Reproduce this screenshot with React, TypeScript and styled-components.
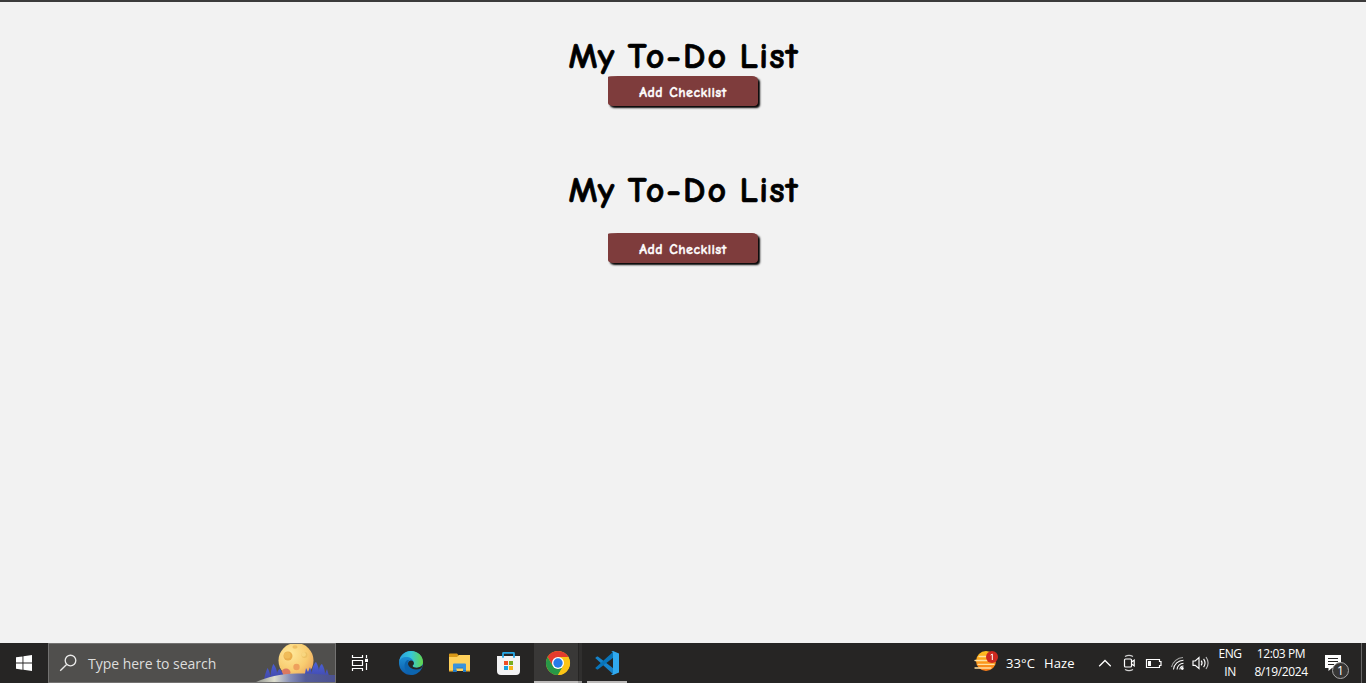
import React from "react";
import styled, { createGlobalStyle } from "styled-components";

const GlobalStyle = createGlobalStyle`
  * { box-sizing: border-box; }
  body { margin: 0; background: #f2f2f2; overflow: hidden; }
`;

const Screen = styled.div`
  height: 683px;
  width: 1366px;
  display: flex;
  flex-direction: column;
  background: #f2f2f2;
`;

const BrowserEdge = styled.div`
  height: 2px;
  flex: none;
  background: #3c3b3b;
`;

const Page = styled.main`
  flex: 1;
  display: flex;
  flex-direction: column;
  align-items: center;
  padding-top: 32px;
  font-family: "Comic Sans MS", "Comic Neue", Lato, sans-serif;
`;

const Checklist = styled.section<{ $gap: number }>`
  display: flex;
  flex-direction: column;
  align-items: center;
  gap: ${(p) => p.$gap}px;
  margin-bottom: 62px;
`;

const Title = styled.h1`
  margin: 0;
  width: 229px;
  height: 42px;
  display: flex;
  justify-content: space-between;
  font-size: 36px;
  line-height: 45px;
  font-weight: 700;
  -webkit-text-stroke: 0.7px #000;
  color: #000;
  white-space: nowrap;
`;

const Word = styled.span<{ $spacing: number }>`
  letter-spacing: ${(p) => p.$spacing}px;
  margin-right: ${(p) => -p.$spacing}px;
`;

const AddButton = styled.button`
  width: 150px;
  height: 30px;
  padding: 3px 0 0;
  border: 0;
  border-radius: 10px 6px 4px 5px / 1px 4px 4px 3px;
  background: #7e3c3c;
  color: #fff;
  box-shadow: 2px 2px 2px #000;
  font: 900 14px/27px "Comic Sans MS", "Comic Neue", Lato, sans-serif;
  -webkit-text-stroke: 0.35px #fff;
  letter-spacing: 0.45px;
  word-spacing: 1px;
`;

const Taskbar = styled.footer`
  height: 40px;
  flex: none;
  display: flex;
  background: #262524;
  color: #fff;
  font-family: "Segoe UI", "Open Sans", sans-serif;
`;

const Slot = styled.div<{ $width: number; $active?: boolean }>`
  width: ${(p) => p.$width}px;
  height: 40px;
  flex: none;
  background: ${(p) => (p.$active ? "#393837" : "transparent")};
  svg { display: block; }
`;

const Search = styled.div`
  width: 288px;
  height: 40px;
  flex: none;
  display: flex;
  align-items: center;
  border: 1px solid #737271;
  background: #504f4d;
  svg { display: block; flex: none; }
`;

const SearchHint = styled.span`
  flex: 1;
  white-space: nowrap;
  font-size: 14px;
  letter-spacing: -0.03px;
  color: #dddddc;
  padding-top: 1px;
`;

const Tray = styled.div`
  margin-left: auto;
  display: flex;
  width: 392px;
`;

const Weather = styled.div`
  width: 85px;
  flex: none;
  display: flex;
  align-items: center;
  gap: 9px;
  padding-left: 8px;
  font-size: 13px;
  letter-spacing: 0.1px;
  white-space: nowrap;
`;

const Stack = styled.div<{ $width: number }>`
  width: ${(p) => p.$width}px;
  display: flex;
  flex-direction: column;
  align-items: center;
  padding-top: 2px;
  font-size: 12px;
  line-height: 18px;
  letter-spacing: -0.4px;
  white-space: nowrap;
`;

const ShowDesktop = styled.div`
  width: 5px;
  height: 40px;
  border-left: 1px solid #686767;
`;

const HazeSlot = styled.div`
  width: 24px;
  padding-top: 7px;
  flex: none;
`;

const StartIcon = () => (
  <svg width="48" height="40" fill="#fff">
    <path d="M16 14.3 22.5 13.4V19.5H16zM23.4 13.2 32 12V19.5H23.4zM16 20.5H22.5V26.7L16 25.8zM23.4 20.5H32V28L23.4 26.8z" />
  </svg>
);

const SearchIcon = () => (
  <svg width="39" height="38" fill="none" stroke="#e9e9e8" strokeWidth="1.35">
    <circle cx="21.5" cy="16.5" r="5.3" />
    <path d="M17.6 20.4 11.2 26.8" />
  </svg>
);

const MoonScene = () => (
  <svg width="80" height="38" viewBox="255 644 80 38">
    <defs>
      <radialGradient id="moon" cx=".35" cy=".3" r=".8">
        <stop offset="0" stopColor="#ffe89a" />
        <stop offset=".6" stopColor="#f8cc70" />
        <stop offset="1" stopColor="#eaa15b" />
      </radialGradient>
      <linearGradient id="hill">
        <stop offset="0" stopColor="#8e918c" />
        <stop offset=".23" stopColor="#dedfcf" />
        <stop offset=".43" stopColor="#858db7" />
        <stop offset=".62" stopColor="#545c99" />
        <stop offset="1" stopColor="#4b5190" />
      </linearGradient>
      <linearGradient id="tree" x2="0" y2="1">
        <stop offset="0" stopColor="#4b61da" />
        <stop offset="1" stopColor="#4146a5" />
      </linearGradient>
    </defs>
    <circle cx="296" cy="660.5" r="17.5" fill="url(#moon)" />
    <circle cx="288" cy="656" r="4.5" fill="#e9ad4c" />
    <circle cx="287.2" cy="655.2" r="3.3" fill="#f0bc59" />
    <circle cx="304.5" cy="655" r="3" fill="#edc266" />
    <circle cx="303.6" cy="654.4" r="2.3" fill="#f8d67f" />
    <ellipse cx="295" cy="647" rx="2.6" ry="1.7" fill="#efbf63" />
    <circle cx="296.5" cy="667" r="3.2" fill="#eea05d" />
    <ellipse cx="286" cy="672.5" rx="4.5" ry="4" fill="#db7960" />
    <path fill="url(#tree)" d="M264 680C265 674 267 669 267.5 668C269 670 270 674 270.5 676C271 669 273 664 273.5 664C276 667 277 671 277 673C278 670 279 669 280 669C282 672 284 675 284 678ZM304 679 306 668 308 672 310 667 312 673C312 667 315 662 316 662C318 665 319 669 319 671C319 667 321 664 322 664C324 667 325 671 325 674L327 669 329 676Z" />
    <path fill="url(#hill)" d="M256 682C267 677 280 674 297 673.5C314 673 322 675 336 675V682Z" />
  </svg>
);

const TaskViewIcon = () => (
  <svg width="48" height="40" fill="none" stroke="#fff" strokeWidth="1.2">
    <path d="M16.5 12V14.5H26.5V12M16.5 28V25.5H26.5V28M16.5 17.5H26.5V22.5H16.5ZM30.5 12V15M30.5 20V27" />
    <path d="M29 15.8H32V19H29Z" fill="#fff" stroke="none" />
  </svg>
);

const EdgeIcon = () => (
  <svg width="49" height="40" viewBox="0 0 49 40">
    <defs>
      <linearGradient id="edgeTop"><stop offset="0" stopColor="#299fe0" /><stop offset=".5" stopColor="#36c7d9" /><stop offset="1" stopColor="#65d747" /></linearGradient>
      <linearGradient id="edgeBase" x2="0" y2="1"><stop offset="0" stopColor="#209fe0" /><stop offset="1" stopColor="#0d5bab" /></linearGradient>
    </defs>
    <circle cx="26" cy="20" r="12" fill="url(#edgeBase)" />
    <path fill="url(#edgeTop)" d="M14.1 18.6C15 12.3 20 8 26 8C33 8 38 13 38 19C38 23.1 34.8 24.7 31.7 24.7C28.6 24.7 27.2 23.5 27.6 22.6C28.7 21.7 29 20.9 28.8 19.5C28.2 15.4 24 13.5 20 14C17 14.4 15 16.3 14.1 18.6Z" />
    <path fill="#0c65af" d="M22.2 17C19.2 19 18.8 24.2 20.7 27.3C22.2 29.8 24.5 31.4 27 31.9C31 31.4 34.5 28.9 36.3 25.8C36.4 25.4 36 25.2 35.5 25.5C30.8 28 25.2 26.2 23.3 22.6C22.3 20.6 22.7 18.6 24.2 17.2Z" />
    <path fill="#262524" d="M24.1 18.2C26.1 16.8 29 18 28.9 20.5C28.8 22 27.4 22.2 27.6 23.1C28 24.6 31 25 33 24.5C35 24.1 36.6 23 37.6 22.1C37.3 23.5 36.9 24.6 36.3 25.2C31.5 27.7 26 26.4 23.8 23C22.6 21.2 22.9 19.2 24.1 18.2Z" />
  </svg>
);

const FolderIcon = () => (
  <svg width="49" height="40">
    <path fill="#d99918" d="M14 12V11.3Q14 10.6 15 10.6H22L24 12.7V16H14Z" />
    <path fill="#ffd15b" d="M14 14H22L24 12H35V28H14Z" />
    <path fill="#efb637" d="M14 27H18V28.5H14ZM31 27H35V28.5H31Z" />
    <path fill="#3b93dc" d="M18 29V21.6Q18 20.6 19 20.6H30Q31 20.6 31 21.6V29H28V25H21.5V29Z" />
    <path fill="#237ac5" d="M21.5 24.5H28V25.5H21.5ZM18 27H21.5V29H18ZM28 27H31V29H28Z" />
  </svg>
);

const StoreIcon = () => (
  <svg width="49" height="40">
    <path fill="none" stroke="#27a9e8" strokeWidth="1.8" d="M19 14V10.2Q19 9.8 19.5 9.8H29.5Q30 9.8 30 10.2V14" />
    <path fill="#f3f3f4" d="M13 13H36V28Q36 32 32 32H17Q13 32 13 28Z" />
    <path fill="#27a9e8" d="M18.1 13H19.9V14.8H18.1ZM29.1 13H30.9V14.8H29.1Z" />
    <path fill="#ee4e26" d="M20 18H24V22H20Z" /><path fill="#78ad20" d="M25 18H29V22H25Z" />
    <path fill="#159fe0" d="M20 23H24V27H20Z" /><path fill="#f5b41b" d="M25 23H29V27H25Z" />
  </svg>
);

const ChromeIcon = () => (
  <svg width="44" height="40">
    <circle cx="24" cy="20" r="12" fill="#fbc416" />
    <path fill="#e33b2e" d="M13.6 14A12 12 0 0 1 34.4 14H24L18.8 23Z" />
    <path fill="#279847" d="M13.6 14A12 12 0 0 0 24 32L29.2 23L24 26L18.8 23Z" />
    <path fill="#fbc416" d="M24 14H34.4A12 12 0 0 1 24 32L29.2 23Z" />
    <circle cx="24" cy="20" r="6" fill="#fff" />
    <circle cx="24" cy="20" r="4.7" fill="#267be8" />
    <path fill="#bcbab9" d="M0 38H44V40H0Z" />
  </svg>
);

const CodeIcon = () => (
  <svg width="49" height="40">
    <path fill="#1683ca" d="M13.2 15 15 13.6Q15.6 13.3 16.2 13.7L31.5 25.4V31.5Z" />
    <path fill="#0874b9" d="M13.2 25 15 26.4Q15.6 26.7 16.2 26.3L31.5 14.6V8.5Z" />
    <path fill="#30a9ef" d="M31 8 37 10.6V29.4L31 32Q29.8 32.2 29 31.4Q31 31.6 31 30V10Q31 8.4 29 8.6Q29.8 7.8 31 8Z" />
    <path fill="#bcbab9" d="M5 38H45V40H5Z" />
  </svg>
);

const HazeIcon = () => (
  <svg width="24" height="24">
    <defs><linearGradient id="sun" x2="0" y2="1"><stop offset="0" stopColor="#ffc21f" /><stop offset="1" stopColor="#f87a18" /></linearGradient></defs>
    <circle cx="12" cy="11" r="10" fill="url(#sun)" />
    <path stroke="#ffe0a0" strokeWidth="1.3" strokeLinecap="round" d="M5 6.5H13M1 10.5H13M4 14.3H20M1 18H17" />
    <circle cx="18" cy="7" r="6" fill="#ce2920" />
    <path stroke="#fff" fill="none" d="M16.7 5.1 18.3 4.1V10" />
  </svg>
);

const ChevronIcon = () => (
  <svg width="28" height="40"><path d="M16.2 23.3 22 17.5 27.8 23.3" fill="none" stroke="#fff" strokeWidth="1.3" /></svg>
);

const CameraIcon = () => (
  <svg width="28" height="40" fill="none" stroke="#fff" strokeWidth="1.2">
    <path d="M14 13.6Q18 11.2 22 13.6M14 26.4Q18 28.8 22 26.4" stroke="#d0d0d0" />
    <rect x="13.5" y="16" width="7" height="8" rx="1" />
    <path d="M20.5 19 23.2 17.2V22.8L20.5 21" />
  </svg>
);

const BatteryIcon = () => (
  <svg width="25" height="40">
    <path d="M7.5 16.5H20.5V18.5H22V22.5H20.5V24.5H7.5Z" fill="none" stroke="#fff" strokeWidth="1.2" />
    <path d="M9 18H12V23H9Z" fill="#fff" />
  </svg>
);

const WifiIcon = () => (
  <svg width="23" height="40" fill="none" stroke="#fff" strokeWidth="1.05">
    <path stroke="#a5a5a4" d="M7.5 24A12.5 12.5 0 0 1 19 14.5" />
    <path d="M9.5 26.5A10 10 0 0 1 19.5 17.3M13 26.5A7 7 0 0 1 19.5 20.2M15.8 26.5A4 4 0 0 1 19.5 23" />
    <circle cx="18.3" cy="25.5" r="1.4" fill="#fff" stroke="none" />
  </svg>
);

const SpeakerIcon = () => (
  <svg width="25" height="40" fill="none" stroke="#fff" strokeWidth="1.15">
    <path d="M6 18H8.2L12 14.5V25.5L8.2 22.3H6Z" />
    <path d="M14.2 17.6Q15.9 20 14.2 22.4M16.6 15.8Q19.5 20 16.6 24.2" />
    <path d="M19 14Q23.2 20 19 26" stroke="#bbb" />
  </svg>
);

const BadgeCount = styled.span`
  position: absolute;
  left: 8px;
  top: 19px;
  width: 17px;
  height: 17px;
  border: 1px solid #a9a8a8;
  border-radius: 50%;
  background: #373635;
  text-align: center;
  font-size: 12px;
  line-height: 15px;
`;

const Notifications = styled.div`
  position: relative;
  width: 37px;
  height: 40px;
  margin-left: 10px;
  flex: none;
`;

const NotificationIcon = () => (
  <svg width="37" height="40">
    <path fill="#fff" d="M1 12H17V25H8L4.5 28V25H1Z" />
    <path stroke="#262524" d="M4 15.5H14M4 18.5H14M4 21.5H10" />
  </svg>
);

const TodoTitle = () => (
  <Title>
    <Word $spacing={0.2}>My</Word>
    <Word $spacing={2}>To-Do</Word>
    <Word $spacing={1.2}>List</Word>
  </Title>
);

export default function App() {
  return (
    <Screen>
      <GlobalStyle />
      <BrowserEdge />
      <Page>
        <Checklist $gap={0}>
          <TodoTitle />
          <AddButton>Add Checklist</AddButton>
        </Checklist>
        <Checklist $gap={23}>
          <TodoTitle />
          <AddButton>Add Checklist</AddButton>
        </Checklist>
      </Page>
      <Taskbar>
        <Slot $width={48}><StartIcon /></Slot>
        <Search>
          <SearchIcon />
          <SearchHint>Type here to search</SearchHint>
          <MoonScene />
        </Search>
        <Slot $width={49}><TaskViewIcon /></Slot>
        <Slot $width={50}><EdgeIcon /></Slot>
        <Slot $width={49}><FolderIcon /></Slot>
        <Slot $width={50}><StoreIcon /></Slot>
        <Slot $width={44} $active><ChromeIcon /></Slot>
        <Slot $width={4}>
          <svg width="4" height="40"><path fill="#302f2e" d="M1 0H4V38H1Z" /><path fill="#9a9998" d="M0 38H4V40H0Z" /></svg>
        </Slot>
        <Slot $width={49}><CodeIcon /></Slot>
        <Tray>
          <HazeSlot><HazeIcon /></HazeSlot>
          <Weather><span>33°C</span><span>Haze</span></Weather>
          <ChevronIcon />
          <CameraIcon />
          <BatteryIcon />
          <WifiIcon />
          <SpeakerIcon />
          <Stack $width={36}><span>ENG</span><span>IN</span></Stack>
          <Stack $width={66}><span>12:03 PM</span><span>8/19/2024</span></Stack>
          <Notifications><NotificationIcon /><BadgeCount>1</BadgeCount></Notifications>
          <ShowDesktop />
        </Tray>
      </Taskbar>
    </Screen>
  );
}
